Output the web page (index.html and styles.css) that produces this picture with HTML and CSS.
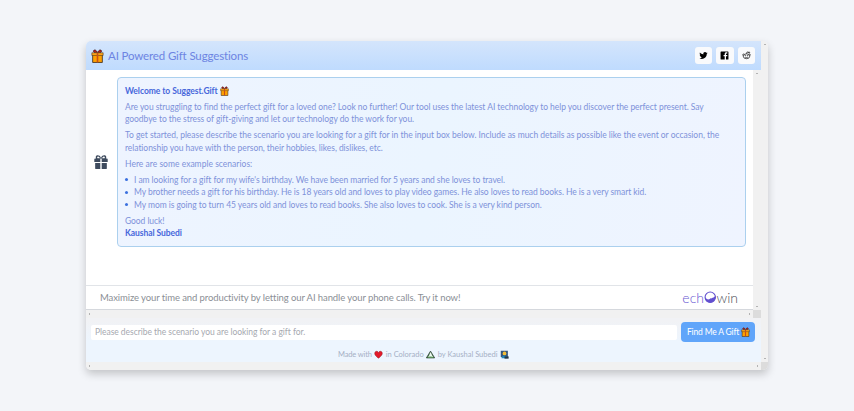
FILE: index.html
```
<!DOCTYPE html>
<html lang="en">
<head>
<meta charset="utf-8">
<title>AI Powered Gift Suggestions</title>
<link rel="stylesheet" href="styles.css">
</head>
<body>
<svg class="defs" width="0" height="0" aria-hidden="true">
  <symbol id="present" viewBox="0 0 24 26">
    <path d="M11 7C4 8 3 3 6 2c3-1 5 3 6 5 1-2 3-6 6-5 3 1 2 6-5 5" fill="#b71c1c" stroke="#402020" stroke-width="1.5"/>
    <path d="M3 9h18v16H3z" fill="#ffa000" stroke="#3b2a20" stroke-width="1.5"/>
    <path d="M1.500 7h21v5h-21z" fill="#ffa719" stroke="#3b2a20" stroke-width="1"/>
    <path d="M10.500 7h3v18h-3z" fill="#c65018"/>
  </symbol>
</svg>
<main class="app">
  <div class="content">
    <header class="header">
      <svg class="logo"><use href="#present"/></svg>
      <h1>AI Powered Gift Suggestions</h1>
      <nav class="social">
        <a><svg viewBox="0 0 24 24"><path d="M23 5.500c-.8.400-1.700.6-2.600.7.900-.6 1.600-1.400 2-2.500-.9.500-1.800.9-2.900 1.100A4.500 4.500 0 0 0 11.700 9C8 8.800 4.700 7 2.500 4.300c-1.200 2-.6 4.700 1.400 6-.7 0-1.400-.2-2-.6 0 2.200 1.500 4.100 3.600 4.500-.7.200-1.400.2-2 .1.600 1.800 2.200 3.100 4.200 3.100A9.100 9.100 0 0 1 1 19.300c8.600 5.100 20-.4 19.700-11.500.9-.6 1.700-1.400 2.300-2.300z"/></svg></a>
        <a><svg viewBox="0 0 24 24"><path d="M3 1.500h18c1 0 1.500.5 1.500 1.500v18c0 1-.5 1.500-1.500 1.500h-5V14h3l.5-3.500H16v-2c0-1 .5-1.800 2-1.800h1.600V3.500C14.800 2.700 12.500 4.500 12.500 8v2.500h-3V14h3v8.500H3c-1 0-1.500-.5-1.500-1.500V3c0-1 .5-1.500 1.500-1.500z"/></svg></a>
        <a><svg viewBox="0 0 24 24" fill="none" stroke="#222" stroke-width="2"><ellipse cx="12" cy="14" rx="8.500" ry="6.500"/><path d="M12 7.500 13.500 2.500l5 1.300M3.500 13C-.5 11 3 6.500 6 9M20.500 13c4-2 .5-6.500-2.500-4M8.500 16.500c2 1.500 5 1.500 7 0"/><circle cx="19" cy="4" r="1.400"/><circle cx="9" cy="12.500" r=".8"/><circle cx="15" cy="12.500" r=".8"/></svg></a>
      </nav>
    </header>
    <section class="pane">
      <div class="pane-main">
        <div class="chat">
          <svg class="avatar" viewBox="0 0 24 24"><path fill-rule="evenodd" d="M12 5C10-1 2.500-.5 3 4c0 1 .3 1.600.7 2H2Q.5 6 .5 7.500V12h10.300V6h2.400v6h10.300V7.500Q23.500 6 22 6h-1.700c.4-.4.700-1 .7-2 .5-4.500-7-5-9 1zM6 5.500C4.500 4 6 2 8 3c1 .5 1.700 1.500 2 2.500zm12 0C19.500 4 18 2 16 3c-1 .5-1.700 1.500-2 2.500zM2 13.500h8.800V24H3.500Q2 24 2 22.500zm11.200 0H22v9q0 1.500-1.500 1.500h-7.300z"/></svg>
          <article class="card">
            <p><b class="title">Welcome to Suggest.Gift</b> <svg class="mini"><use href="#present"/></svg></p>
            <p><span>Are you struggling to find the perfect gift for a loved one? Look no further! Our tool uses the latest AI technology to help you discover the perfect present. Say</span><br><span>goodbye to the stress of gift-giving and let our technology do the work for you.</span></p>
            <p><span class="loose">To get started, please describe the scenario you are looking for a gift for in the input box below. Include as much details as possible like the event or occasion, the</span><br><span>relationship you have with the person, their hobbies, likes, dislikes, etc.</span></p>
            <p><span class="wide">Here are some example scenarios:</span></p>
            <ul>
              <li><span class="tight">I am looking for a gift for my wife's birthday. We have been married for 5 years and she loves to travel.</span></li>
              <li><span class="snug">My brother needs a gift for his birthday. He is 18 years old and loves to play video games. He also loves to read books. He is a very smart kid.</span></li>
              <li><span>My mom is going to turn 45 years old and loves to read books. She also loves to cook. She is a very kind person.</span></li>
            </ul>
            <p><span class="tight">Good luck!</span><br><b>Kaushal Subedi</b></p>
          </article>
        </div>
        <div class="promo">
          <span class="promo-text">Maximize your time and productivity by letting our AI handle your phone calls. Try it now!</span>
          <span class="brand"><span>ech</span><svg viewBox="0 0 24 24"><circle cx="12" cy="12" r="10" fill="#fff" stroke="#6250cf" stroke-width="2"/><path d="M2 11c2 4 5 6 8 5 2-3 7-1 12-7 1 8-4 13-10 13S1 18 2 11z" fill="#6250cf"/></svg><span class="win">win</span></span>
        </div>
      </div>
      <i class="track v"></i><i class="track h"></i><i class="corner"></i>
    </section>
    <form class="ask">
      <div class="field"><span>Please describe the scenario you are looking for a gift for.</span></div>
      <button type="button"><span>Find Me A Gift</span><svg class="mini"><use href="#present"/></svg></button>
    </form>
    <footer>
      <span class="made">Made with</span>
      <svg viewBox="0 0 24 24"><path d="M12 22C3 15 1 11 2 7c2-5 8-5 10 0 2-5 8-5 10 0 1 4-1 8-10 15z" fill="#e21b2c" stroke="#7c1d25"/></svg>
      <span>in Colorado</span>
      <svg viewBox="0 0 24 24"><path d="M12 3 23 21H1z" fill="#4b7a45" stroke="#273b34" stroke-width="2"/><path d="m12 5 5 11 3 3H5l3-4z" fill="#eef7f4"/><path d="M3 20c5-4 13-4 18 0z" fill="#4f9a4a"/></svg>
      <span>by Kaushal Subedi</span>
      <svg viewBox="0 0 24 24"><path d="M2 2h19v17H2z" fill="#35567d"/><circle cx="12" cy="9" r="5" fill="#f4bd36"/><path d="M4 22c0-10 16-10 16 0z" fill="#2489bd"/><path d="M12 17h11v6H12z" fill="#263645"/></svg>
    </footer>
  </div>
  <i class="track v"></i><i class="track h"></i><i class="corner"></i>
</main>
</body>
</html>
```
FILE: styles.css
```
* { box-sizing: border-box; }
body { margin: 0; height: 411px; padding: 41px 0 0 86px; background: #f3f5f9; font-family: Lato, sans-serif; font-size: 8.5px; }
.defs { display: block; position: absolute; }
h1, p, ul { margin: 0; padding: 0; }
span, b, h1 { white-space: nowrap; }
.app { display: grid; grid-template-columns: 675px 7px; grid-template-rows: 321px 8px; width: 682px; height: 329px; border-radius: 5px; overflow: hidden; box-shadow: 0 4px 9px #0003; }
.content { grid-area: 1 / 1; display: flex; flex-direction: column; background: linear-gradient(#f1f2f5 280px, #edf5fe 300px); }
.header { height: 29px; flex: none; display: flex; align-items: center; padding: 0 6px 0 5px; background: linear-gradient(#d4e5fc, #bfdbfe); }
.logo { width: 13px; height: 14px; }
h1 { margin-left: 4px; font-size: 11.5px; font-weight: 400; letter-spacing: -.14px; color: #6d84e2; }
.social { display: flex; gap: 4px; margin-left: auto; }
.social a { width: 17.500px; height: 17px; border-radius: 3px; background: #f9fafc; display: grid; place-items: center; }
.social svg { width: 9px; height: 9px; }
.pane { height: 248px; flex: none; display: grid; grid-template-columns: 667px 8px; grid-template-rows: 240px 8px; }
.pane-main { display: flex; flex-direction: column; background: #fff; }
.chat { height: 215px; display: flex; padding: 7px 7px 0 8px; }
.avatar { width: 14px; height: 14px; margin: 78px 9px 0 0; fill: #3e4b5e; }
.card { width: 629px; height: 170px; border: 1px solid #abd0ee; border-radius: 4px; background: linear-gradient(100deg, #eef4ff, #ebf5ff 50%, #eff4ff); padding: 7px; line-height: 12.450px; letter-spacing: -.052px; color: #7e92da; }
.card p { margin-bottom: 3.500px; }
.card b { color: #4767db; font-weight: 700; }
.card .title { letter-spacing: -.05px; }
.card .tight { letter-spacing: -.07px; }
.card .snug { letter-spacing: -.061px; }
.card .loose { letter-spacing: -.019px; }
.card .wide { letter-spacing: .02px; }
.mini { width: 9px; height: 10px; vertical-align: -1.500px; flex: none; }
ul { list-style: none; }
.card ul { margin-bottom: 3.500px; }
li { display: flex; align-items: center; }
li::before { content: ""; width: 3px; height: 3px; border-radius: 50%; background: #3b70df; margin: 0 6px 0 0; }
.promo { height: 25px; border-top: 1px solid #e1e4e8; border-bottom: 1px solid #d5d8dd; display: flex; align-items: center; justify-content: space-between; padding: 0 15px 0 14px; font-size: 9.500px; color: #8b8f96; }
.promo-text { letter-spacing: -.098px; }
.brand { display: flex; align-items: center; font-size: 14px; color: #6757d2; }
.brand span { font-weight: 300; }
.brand svg { width: 12.500px; height: 12.500px; }
.brand .win { color: #4c4f58; }
.track { background: #f1f1f1; position: relative; }
.track.v { grid-area: 1 / 2; }
.track.h { grid-area: 2 / 1; }
.corner { grid-area: 2 / 2; background: #dcdcdc; }
.track::before, .track::after { content: ""; position: absolute; border: 1.500px solid transparent; }
.v::before { border-bottom-color: #777; top: 2px; left: 2.500px; }
.v::after { border-top-color: #777; bottom: 2px; left: 2.500px; }
.h::before { border-right-color: #777; left: 2px; top: 2.500px; }
.h::after { border-left-color: #777; right: 2px; top: 2.500px; }
.ask { display: flex; align-items: center; gap: 4px; padding: 4px 6px 0 5px; }
.field { width: 586px; height: 15px; border-radius: 2px; background: #fff; color: #a6a9b0; display: flex; align-items: center; padding-left: 4px; letter-spacing: -.04px; }
button { width: 74px; height: 20px; border: 0; border-radius: 4px; background: #60a5fa; color: #fff; font: 8.500px Lato, sans-serif; letter-spacing: -.17px; display: flex; align-items: center; justify-content: space-between; padding: 0 5px 0 6px; }
footer { display: flex; flex: 1; padding-top: 5px; align-items: center; justify-content: center; gap: 2.500px; font-size: 7.500px; color: #a5b0c5; }
footer svg { width: 9px; height: 9px; }
.made { letter-spacing: -.15px; }
```
